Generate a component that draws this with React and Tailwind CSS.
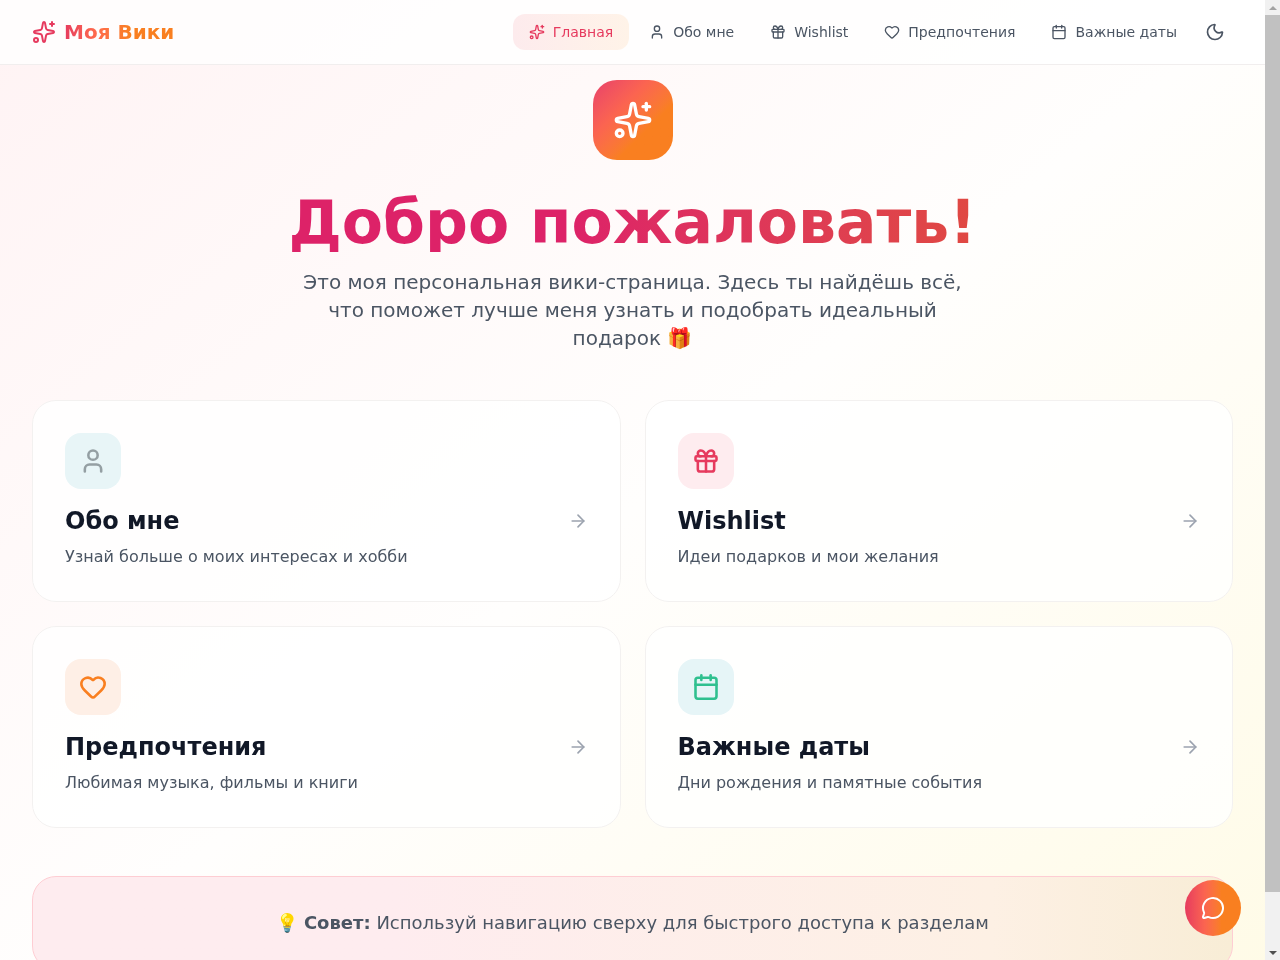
import { Sparkles, User, Gift, Heart, Calendar, Moon, ArrowRight, MessageCircle } from "lucide-react";

const navItems = [
  { label: "Главная", icon: Sparkles, active: true },
  { label: "Обо мне", icon: User },
  { label: "Wishlist", icon: Gift },
  { label: "Предпочтения", icon: Heart },
  { label: "Важные даты", icon: Calendar },
];

const cards = [
  {
    title: "Обо мне",
    text: "Узнай больше о моих интересах и хобби",
    icon: User,
    box: "bg-[#e8f5f7]",
    color: "text-[#949fa3]",
  },
  {
    title: "Wishlist",
    text: "Идеи подарков и мои желания",
    icon: Gift,
    box: "bg-[#feecef]",
    color: "text-[#e63a5e]",
  },
  {
    title: "Предпочтения",
    text: "Любимая музыка, фильмы и книги",
    icon: Heart,
    box: "bg-[#feefe6]",
    color: "text-[#f97f20]",
  },
  {
    title: "Важные даты",
    text: "Дни рождения и памятные события",
    icon: Calendar,
    box: "bg-[#e6f5f7]",
    color: "text-[#2fc08f]",
  },
];

function Nav() {
  return (
    <nav className="h-[65px] border-b border-[#f1eeee] bg-white/80 px-8 flex items-center justify-between will-change-transform">
      <div className="flex items-center gap-2">
        <Sparkles className="w-6 h-6 text-[#e63a5e]" />
        <span className="text-xl font-bold bg-linear-to-r from-[#e63a5e] via-[#ff6b4a] via-30% to-[#f97f20] to-60% bg-clip-text text-transparent">
          Моя Вики
        </span>
      </div>
      <div className="flex items-center gap-1">
        {navItems.map((item) => {
          const Icon = item.icon;
          return (
            <a
              key={item.label}
              className={
                item.active
                  ? "flex items-center gap-2 px-4 h-9 rounded-xl text-sm text-[#e63a5e] bg-linear-to-r from-[#fdebed] to-[#fff3e8]"
                  : "flex items-center gap-2 px-4 h-9 rounded-xl text-sm text-[#4b5563]"
              }
            >
              <Icon className="w-4 h-4" />
              {item.label}
            </a>
          );
        })}
        <button className="p-2 text-[#4b5563]">
          <Moon className="w-5 h-5" />
        </button>
      </div>
    </nav>
  );
}

function Card({ card }) {
  const Icon = card.icon;
  return (
    <div className="rounded-3xl border border-[#f3f1f0] bg-white/80 p-8">
      <div className={`w-14 h-14 rounded-2xl flex items-center justify-center mb-4 ${card.box}`}>
        <Icon className={`w-7 h-7 ${card.color}`} strokeWidth={2.2} />
      </div>
      <div className="flex items-center justify-between">
        <h3 className="text-2xl font-bold text-[#111827]">{card.title}</h3>
        <ArrowRight className="w-5 h-5 text-[#9ca3af]" />
      </div>
      <p className="mt-2 text-base text-[#4b5563]">{card.text}</p>
    </div>
  );
}

// the browser here draws no scrollbar of its own, so the one in the picture is drawn
function Scrollbar() {
  return (
    <div className="w-[15px] shrink-0 flex flex-col bg-[#f1f1f1]">
      <div className="h-[15px] flex items-center justify-center">
        <div className="w-0 h-0 border-x-[4px] border-x-transparent border-b-[4px] border-b-[#a3a3a3]" />
      </div>
      <div className="h-[877px] bg-[#c1c1c1]" />
      <div className="flex-1" />
      <div className="h-[15px] flex items-center justify-center">
        <div className="w-0 h-0 border-x-[4px] border-x-transparent border-t-[4px] border-t-[#505050]" />
      </div>
    </div>
  );
}

export default function App() {
  return (
    <div className="h-screen flex overflow-hidden font-['DejaVu_Sans',sans-serif]">
      <div className="relative flex-1 min-w-0">
        <div className="bg-linear-to-br/srgb from-[#fff3f4] via-[#fffefd] to-[#fffbe6]">
          <Nav />
          <main className="px-8 pt-[15px] pb-12">
            <section className="flex flex-col items-center text-center mb-12 will-change-transform">
              <div className="w-20 h-20 rounded-3xl flex items-center justify-center mb-8 bg-linear-to-br from-[#e8406a] via-[#fb6450] via-35% to-[#f97f20] to-65%">
                <Sparkles className="w-10 h-10 text-white" />
              </div>
              <h1 className="w-full text-6xl font-bold mb-4 bg-linear-to-r from-[#dd2268] from-45% to-[#e04a40] to-80% bg-clip-text text-transparent">
                Добро пожаловать!
              </h1>
              <p className="max-w-2xl text-xl leading-7 text-[#4b5563]">
                Это моя персональная вики-страница. Здесь ты найдёшь всё, что поможет лучше меня узнать и подобрать идеальный подарок 🎁
              </p>
            </section>
            <section className="grid grid-cols-2 gap-6 will-change-transform">
              {cards.map((card) => (
                <Card key={card.title} card={card} />
              ))}
            </section>
            <section className="mt-12 rounded-3xl border border-[#fecdd3] bg-linear-to-r from-[#feecef] from-30% via-[#fdf0e4] via-80% to-[#f8edd6] p-8 text-center text-lg leading-7 text-[#4b5563] will-change-transform">
              💡 <b>Совет:</b> Используй навигацию сверху для быстрого доступа к разделам
            </section>
          </main>
        </div>
        <button className="absolute right-6 bottom-6 w-14 h-14 rounded-full flex items-center justify-center text-white bg-linear-to-r from-[#e63a5e] via-[#fb6450] via-35% to-[#f97f20] to-65%">
          <MessageCircle className="w-6 h-6" />
        </button>
      </div>
      <Scrollbar />
    </div>
  );
}
